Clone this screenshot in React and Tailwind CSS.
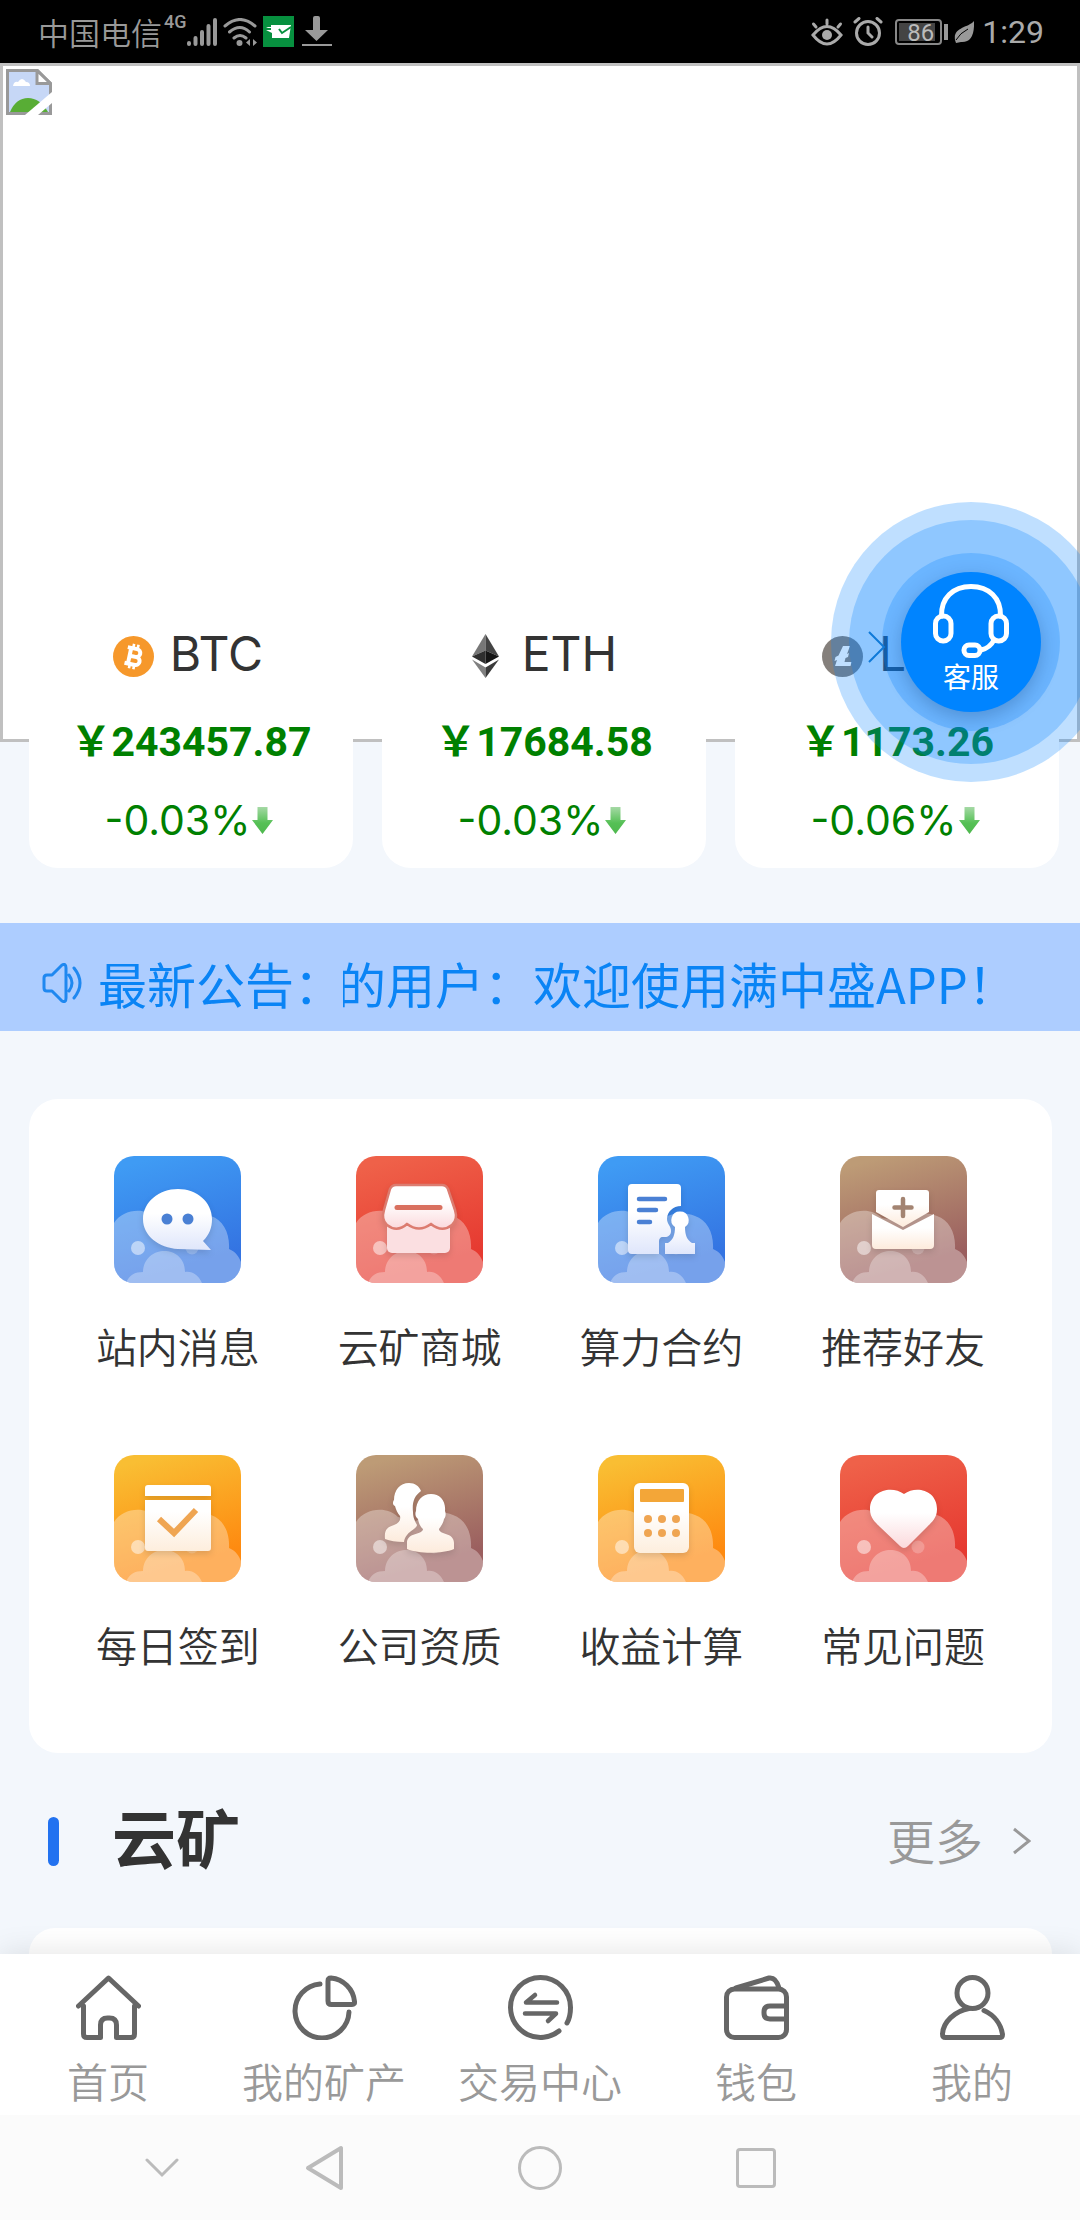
const coins = [
  { name: 'BTC', price: '243457.87', change: '-0.03%', Icon: BtcIcon },
  { name: 'ETH', price: '17684.58', change: '-0.03%', Icon: EthIcon },
  { name: 'LTC', price: '1173.26', change: '-0.06%', Icon: LtcIcon },
]

const tints = {
  blue: { from: '#3f9bf4', to: '#3474e2', glyph: '#dfe6fb', ink: '#4a80d4' },
  red: { from: '#ef6149', to: '#e63a31', glyph: '#fbd9dc', ink: '#d9705f' },
  brown: { from: '#bd9b76', to: '#9b5f5f', glyph: '#fdebdc', ink: '#a38472' },
  orange: { from: '#f9be33', to: '#fe8a10', glyph: '#fdeedd', ink: '#efa552' },
}

const menu = [
  { id: 'message', label: '站内消息', tint: 'blue', Glyph: MessageGlyph },
  { id: 'shop', label: '云矿商城', tint: 'red', Glyph: ShopGlyph },
  { id: 'contract', label: '算力合约', tint: 'blue', Glyph: ContractGlyph },
  { id: 'invite', label: '推荐好友', tint: 'brown', Glyph: InviteGlyph },
  { id: 'signin', label: '每日签到', tint: 'orange', Glyph: SigninGlyph },
  { id: 'company', label: '公司资质', tint: 'brown', Glyph: CompanyGlyph },
  { id: 'calc', label: '收益计算', tint: 'orange', Glyph: CalcGlyph },
  { id: 'faq', label: '常见问题', tint: 'red', Glyph: HeartGlyph },
]

const tabs = [
  { label: '首页', Icon: HomeIcon },
  { label: '我的矿产', Icon: PieIcon },
  { label: '交易中心', Icon: ExchangeIcon },
  { label: '钱包', Icon: WalletIcon },
  { label: '我的', Icon: UserIcon },
]

/* ---------- coin icons ---------- */

function BtcIcon() {
  return (
    <svg viewBox="0 0 41 41" className="w-[41px] h-[41px] mt-1">
      <circle cx="20.5" cy="20.5" r="20.5" fill="#f6982b" />
      <g fill="none" stroke="#fff" strokeWidth="4" strokeLinejoin="round" transform="rotate(12 20.5 20.5)">
        <path d="M13 12.5h9.5a4 4 0 0 1 0 8H17M16.500 12.500v16M13 28.500h10.500a4 4 0 0 0 0-8H17" />
        <path d="M18.500 8v4M23 8v4M18.500 29v4M23 29v4" strokeWidth="2.600" />
      </g>
    </svg>
  )
}

function EthIcon() {
  return (
    <svg viewBox="0 0 41 46" className="w-[41px] h-[46px] mt-1">
      <path d="M20.500 1L7 23.500l13.500-6z" fill="#777" />
      <path d="M20.500 1L34 23.500l-13.500-6z" fill="#444" />
      <path d="M7 23.500l13.500-6V31z" fill="#2f2f2f" />
      <path d="M34 23.500l-13.500-6V31z" fill="#151515" />
      <path d="M7 26.500l13.500 8V45z" fill="#808080" />
      <path d="M34 26.500l-13.500 8V45z" fill="#3a3a3a" />
    </svg>
  )
}

function LtcIcon() {
  return (
    <svg viewBox="0 0 41 41" className="w-[41px] h-[41px] mt-1">
      <circle cx="20.500" cy="20.500" r="20.500" fill="#85807c" />
      <path d="M21 10h7l-3 8 2-1-1 4-2.500 1-1 4h7l-1 4H13l2-6-2.500 1 1-4 3-1.500z" fill="#fff" />
    </svg>
  )
}

function DownArrow() {
  return (
    <svg viewBox="0 0 21 27" className="w-[21px] h-[27px]">
      <defs>
        <linearGradient id="down" x1="0" y1="0" x2="0" y2="1">
          <stop offset="0" stopColor="#a5d9a5" />
          <stop offset=".6" stopColor="#55c055" />
          <stop offset="1" stopColor="#4fb84f" />
        </linearGradient>
      </defs>
      <path d="M5.500 0h10v13H21L10.500 27 0 13h5.500z" fill="url(#down)" />
    </svg>
  )
}

/* ---------- menu glyphs, drawn on a 127 grid ---------- */

function MessageGlyph({ fill, ink }) {
  return (
    <>
      <path d="M64 33c19 0 34 13 34 30 0 9-3 16-9 22l8 9c-10 0-22-1-33-1-19-1-35-13-35-30s16-30 35-30z" fill={fill} />
      <circle cx="53" cy="63" r="5.500" fill={ink} />
      <circle cx="74" cy="63" r="5.500" fill={ink} />
    </>
  )
}

function ShopGlyph({ fill, ink }) {
  return (
    <>
      <path d="M31 70h63v22a5 5 0 0 1-5 5H36a5 5 0 0 1-5-5z" fill="#fbdfe1" />
      <path
        d="M40 29h46q4 0 6 4l7 21q3 10-3 15-10 8-21-1-12 9-24 0-10 9-20 1-6-5-3-15l6-21q2-4 6-4z"
        fill={fill}
        stroke="#dc7c70"
        strokeWidth="2.500"
      />
      <path d="M41 51.500h43" stroke={ink} strokeWidth="5" strokeLinecap="round" />
    </>
  )
}

function ContractGlyph({ fill, ink }) {
  return (
    <>
      <path d="M34 28h45a4 4 0 0 1 4 4v18c-8 0-14 6-14 13 0 5 4 7 4 12 0 4-3 6-6 6h-2c-3 0-4 2-4 5v12H34a4 4 0 0 1-4-4V32a4 4 0 0 1 4-4z" fill={fill} />
      <path d="M41 43h26M41 54h17M41 66h11" stroke={ink} strokeWidth="4.500" strokeLinecap="round" />
      <path d="M82 55.500a8.500 8.500 0 0 1 5 15.500c0 8 2 13 7 16h3v11H67V87h3c5-3 7-8 7-16a8.500 8.500 0 0 1 5-15.500z" fill={fill} />
    </>
  )
}

function InviteGlyph({ fill, ink }) {
  return (
    <>
      <path d="M39 34h47a3 3 0 0 1 3 3v19L63 71 36 56V37a3 3 0 0 1 3-3z" fill={fill} />
      <path d="M63 43v17M54.500 51.500h17" stroke={ink} strokeWidth="4.500" strokeLinecap="round" />
      <path d="M32 58l31 16 31-16v31a4 4 0 0 1-4 4H36a4 4 0 0 1-4-4z" fill={fill} />
    </>
  )
}

function SigninGlyph({ fill, ink }) {
  return (
    <>
      <path d="M34 30h60a3 3 0 0 1 3 3v8H31v-8a3 3 0 0 1 3-3zM31 45h66v48a3 3 0 0 1-3 3H34a3 3 0 0 1-3-3z" fill={fill} />
      <path d="M45 64l15 14 22-23" fill="none" stroke={ink} strokeWidth="6" />
    </>
  )
}

function CompanyGlyph({ fill }) {
  return (
    <>
      <path d="M53 28c6 0 10 3 12 8-7 5-9 12-8 21 0 6 2 9 4 13-1 5-11 6-13 17-8 0-14-1-19-3-1-10 3-12 9-14 5-2 7-5 6-9-3-3-4-7-5-10-3-1-2-5-1-6 0-10 6-17 15-17z" fill={fill} />
      <path d="M75 39c9 0 15 7 14 17 1 2 1 6-1 8-1 5-3 7-5 10 0 6 15 3 15 14v6c-12 5-35 5-47 0v-6c0-11 16-8 16-14-3-3-4-5-5-10-3-2-3-6-2-8 0-10 6-17 15-17z" fill={fill} />
    </>
  )
}

function CalcGlyph({ fill, ink }) {
  return (
    <>
      <rect x="36" y="28" width="55" height="70" rx="6" fill={fill} />
      <rect x="42" y="34" width="44" height="13" rx="1" fill="#f3a638" />
      {[64, 78].map((cy) => [50, 64, 78].map((cx) => <circle key={cx + '-' + cy} cx={cx} cy={cy} r="4" fill={ink} />))}
    </>
  )
}

function HeartGlyph({ fill }) {
  return <path d="M64 39c12-9 33-4 33 15 0 9-5 13-10 18L68 91q-4 4-8 0L40 72c-5-5-10-9-10-18 0-19 22-24 34-15z" fill={fill} />
}

function MenuTile({ id, tint, Glyph }) {
  const t = tints[tint]
  return (
    <svg viewBox="0 0 127 127" className="w-[127px] h-[127px] rounded-[20px]">
      <defs>
        <linearGradient id={id + '-bg'} x1=".35" y1="0" x2=".65" y2="1">
          <stop offset="0" stopColor={t.from} />
          <stop offset=".85" stopColor={t.to} />
        </linearGradient>
        <linearGradient id={id + '-fg'} x1="0" y1="0" x2="0" y2="1">
          <stop offset=".4" stopColor="#fff" />
          <stop offset="1" stopColor={t.glyph} />
        </linearGradient>
      </defs>
      <rect width="127" height="127" fill={'url(#' + id + '-bg)'} />
      <path d="M0 67c8-13 30-17 42-5 8 1 13 2 18 4 10-9 25-11 37-6 12 4 19 17 18 33 7 3 10 8 12 13v21H0z" fill="#fff" opacity=".33" />
      <path d="M12 127c3-8 9-11 17-11 1-28 42-28 42 0 8-1 13 3 17 11z" fill="#fff" opacity=".3" />
      <circle cx="24" cy="92" r="7" fill="#fff" opacity=".5" />
      <circle cx="78" cy="92" r="6.500" fill="#fff" opacity=".22" />
      <g className="drop-shadow-md">
        <Glyph fill={'url(#' + id + '-fg)'} ink={t.ink} />
      </g>
    </svg>
  )
}

/* ---------- tab bar icons ---------- */

function TabSvg({ children }) {
  return (
    <svg
      viewBox="0 0 65 65"
      className="w-[65px] h-[65px]"
      fill="none"
      stroke="#666"
      strokeWidth="5"
      strokeLinecap="round"
      strokeLinejoin="round"
    >
      {children}
    </svg>
  )
}

function HomeIcon() {
  return (
    <TabSvg>
      <path d="M2.500 31L32.500 3l30 28M7.500 31v28q0 3.500 3.500 3.500h13.500V50q0-7 7-7h2q7 0 7 7v12.500H55q3.500 0 3.500-3.500V31" />
    </TabSvg>
  )
}

function PieIcon() {
  return (
    <TabSvg>
      <path d="M28 9A27 27 0 1 0 57 37" />
      <path d="M39 3q-3 0-3 3v20q0 3.500 3.500 3.500H60q3 0 2.500-3A26 26 0 0 0 39 3z" />
    </TabSvg>
  )
}

function ExchangeIcon() {
  return (
    <TabSvg>
      <path d="M51 56A30 30 0 0 1 2.500 32.500a30 30 0 0 1 60 0Q62.500 42 59 48" />
      <path d="M49 27.500H18l9-7.500M17 38.500h31l-8 7.500" strokeWidth="4.500" />
    </TabSvg>
  )
}

function WalletIcon() {
  return (
    <TabSvg>
      <rect x="2.500" y="14" width="60" height="48.500" rx="8" />
      <path d="M12 13L45 3q7-1 10 10M62 31H46q-6 0-6 6v1q0 6 6 6h16" />
    </TabSvg>
  )
}

function UserIcon() {
  return (
    <TabSvg>
      <circle cx="32.500" cy="18" r="15.500" />
      <path d="M29 33.500C15 36 3 47 2.500 59q0 3.500 3 3.500h54q3 0 3-3C61 49 54 40 44 35.500" />
    </TabSvg>
  )
}

/* ---------- page parts ---------- */

function StatusBar() {
  return (
    <div className="h-[63px] bg-black text-[#999] flex items-center justify-between pl-[38px] pr-9">
      <div className="flex items-center">
        <span className="text-[31px] leading-10 font-[350]">中国电信</span>
        <span className="text-[18px] leading-5 ml-0.5 self-start font-[Roboto] font-medium">4G</span>
        <svg viewBox="0 0 30 30" className="w-[30px] h-[30px]" stroke="#999" strokeWidth="4" strokeLinecap="round">
          <path d="M2 26v1M8.500 21v6M15 15v12M21.500 9v18M28 3v24" />
        </svg>
        <svg viewBox="0 0 34 28" className="w-[34px] h-7 ml-1.5" fill="none" stroke="#999" strokeWidth="3" strokeLinecap="round">
          <path d="M2 8q15-13 30 0M6.500 14q10.500-9 20 0M11 20q6-5 12 0" />
          <circle cx="16.500" cy="25" r="1.500" fill="#999" />
          <path d="M27 21v7l-4-3.500zM30 21v7l4-3.500z" fill="#999" stroke="none" />
        </svg>
        <svg viewBox="0 0 31 31" className="w-[31px] h-[31px] ml-1.5">
          <rect width="31" height="31" fill="#07903f" />
          <path d="M8 9h20l-2 13H9v-5L3 14h5v-2H5l-2-1h5z" fill="#fff" />
          <path d="M16 13l3 4 9-6" fill="none" stroke="#07903f" strokeWidth="2" />
        </svg>
        <svg viewBox="0 0 30 31" className="w-[30px] h-[31px] ml-2" fill="#999">
          <path d="M11 2q0-2 2-2h3q2 0 2 2v12h8L14.500 25 3 14h8zM0 28h30v2H0z" />
        </svg>
      </div>
      <div className="flex items-center">
        <svg viewBox="0 0 32 28" className="w-8 h-7" fill="none" stroke="#aaa" strokeWidth="3" strokeLinecap="round">
          <path d="M2 17q14-17 28 0-14 18-28 0zM16 6V2M5 9L2.500 6M27 9l2.500-3" />
          <circle cx="16" cy="17" r="5" fill="#aaa" stroke="none" />
        </svg>
        <svg viewBox="0 0 30 29" className="w-[30px] h-[29px] ml-[10px]" fill="none" stroke="#aaa" strokeWidth="3" strokeLinecap="round">
          <circle cx="15" cy="16" r="11.500" />
          <path d="M15 10v6l4 4M2 5l4-3.500M28 5l-4-3.500" />
        </svg>
        <div className="ml-3 h-[26px] w-[47px] border-2 border-[#888] rounded p-0.5">
          <div className="bg-[#444] h-full w-9 text-[24px] leading-5 pl-2 text-[#bbb] font-[Roboto]">86</div>
        </div>
        <div className="w-1 h-4 bg-[#999] ml-0.5" />
        <svg viewBox="0 0 20 22" className="w-5 h-[22px] ml-1.5">
          <path d="M20 0q1 22-13 21l-5 1-1-3C-1 6 14 7 20 0z" fill="#999" />
          <path d="M2 19Q6 12 14 8" stroke="#000" fill="none" />
        </svg>
        <span className="text-[32px] leading-10 ml-2 font-[Roboto] text-[#aaa]">1:29</span>
      </div>
    </div>
  )
}

function BrokenImage() {
  return (
    <svg viewBox="0 0 46 46" className="w-[46px] h-[46px]">
      <path d="M1.500 1.500h30l13 13v30h-43z" fill="#c6d7f6" stroke="#999" strokeWidth="3" />
      <path d="M7 17q1-5 5-4 4-6 8 0 4 0 4 4z" fill="#fff" />
      <path d="M4 43q6-14 18-14 12 0 20 14z" fill="#58ad35" />
      <path d="M31 1.500v13h13.500z" fill="#fff" stroke="#999" strokeWidth="3" />
      <path d="M19 46L46 23v11L32 46z" fill="#fff" />
    </svg>
  )
}

function CoinCard({ coin }) {
  const { Icon } = coin
  return (
    <div className="bg-white rounded-[29px] pt-4 pb-6 flex flex-col items-center">
      <div className="h-14 flex items-center gap-4 pr-1.5">
        <Icon />
        <span className="text-[48px] leading-[56px] text-[#333] font-[Inter]">{coin.name}</span>
      </div>
      <div className="mt-9 text-[41px] leading-[48px] font-bold text-[#008000] font-[Roboto,'Noto_Sans_CJK_SC',sans-serif]">
        ￥{coin.price}
      </div>
      <div className="mt-[30px] h-12 flex items-center gap-0.5 pr-1">
        <span className="text-[41px] leading-[48px] text-[#008000] font-[Inter]">{coin.change}</span>
        <DownArrow />
      </div>
    </div>
  )
}

function ServiceButton() {
  return (
    <button
      type="button"
      className="absolute top-[502px] -right-[31px] w-[280px] h-[280px] rounded-full bg-[#0080ff]/25 flex items-center justify-center"
    >
      <span className="w-[244px] h-[244px] rounded-full bg-[#0080ff]/25 flex items-center justify-center">
        <span className="w-[178px] h-[178px] rounded-full bg-[#0080ff]/25 flex items-center justify-center">
          <span className="w-[140px] h-[140px] rounded-full bg-[#0084ff] shadow-[0_6px_18px_rgba(0,40,90,0.25)] flex flex-col items-center pt-3">
            <svg viewBox="0 0 76 74" className="w-[76px] h-[74px]" fill="none" stroke="#fff" strokeWidth="5" strokeLinecap="round">
              <path d="M8.500 32C8 14 20 2.500 38 2.500S68 14 67.500 32" />
              <rect x="2.500" y="32" width="15.500" height="25" rx="7.500" />
              <rect x="58" y="32" width="15.500" height="25" rx="7.500" />
              <rect x="31" y="61" width="16" height="10.500" rx="5" />
              <path d="M48 66q9-2 13-10" />
            </svg>
            <span className="text-[28px] leading-9 text-white">客服</span>
          </span>
        </span>
      </span>
      <svg viewBox="0 0 18 32" className="absolute left-[37px] top-[129px] w-[18px] h-8" fill="none" stroke="#0f7ad8" strokeWidth="2">
        <path d="M1 1l15 15L1 31" />
      </svg>
    </button>
  )
}

function Notice() {
  return (
    <div className="mt-[55px] h-[108px] bg-[#adcdff] text-[#0a84f5] flex items-center pt-3 pl-[42px] pr-10 text-[49px] leading-[60px]">
      <svg viewBox="0 0 40 40" className="w-10 h-10 mr-4 shrink-0" fill="none" stroke="#1f88f0" strokeWidth="3" strokeLinejoin="round" strokeLinecap="round">
        <path d="M5 12h5L20 2q4-2 4 3v30q0 5-4 3L10 28H5q-3 0-3-3V15q0-3 3-3zM27 12q6 8 0 16M32 5q12 15 0 30" />
      </svg>
      <span className="shrink-0">最新公告：</span>
      <div className="overflow-hidden flex-1">
        <p className="whitespace-nowrap -ml-1.5">的用户：欢迎使用满中盛APP！</p>
      </div>
    </div>
  )
}

function SystemNav() {
  return (
    <div className="h-[105px] bg-[#fbfbfb] grid grid-cols-10 items-center justify-items-center">
      <button type="button" aria-label="收起" className="col-start-2">
        <svg viewBox="0 0 34 20" className="w-[34px] h-5" fill="none" stroke="#bbb" strokeWidth="3" strokeLinecap="round">
          <path d="M2 2l15 15L32 2" />
        </svg>
      </button>
      <button type="button" aria-label="返回" className="col-span-2">
        <svg viewBox="0 0 38 46" className="w-[38px] h-[46px]" fill="none" stroke="#bbb" strokeWidth="4" strokeLinejoin="round">
          <path d="M36 3v40L3 23z" />
        </svg>
      </button>
      <button type="button" aria-label="主屏幕" className="col-span-2 w-11 h-11 rounded-full border-[3px] border-[#bbb]" />
      <button type="button" aria-label="最近任务" className="col-span-2 w-10 h-10 rounded border-[3px] border-[#bbb]" />
    </div>
  )
}

export default function App() {
  return (
    <div className="relative min-h-screen overflow-hidden flex flex-col bg-[#f3f7fc] font-['Noto_Sans_CJK_SC',sans-serif]">
      <StatusBar />

      <div className="h-[679px] bg-white border-3 border-[#c0c0c0] p-[3px]">
        <BrokenImage />
      </div>

      <div className="-mt-[132px] pl-[29px] pr-[21px] grid grid-cols-3 gap-[29px]">
        {coins.map((coin) => (
          <CoinCard key={coin.name} coin={coin} />
        ))}
      </div>

      <ServiceButton />
      <Notice />

      <div className="mt-[68px] ml-[29px] mr-7 bg-white rounded-[29px] pt-[57px] pb-[79px] px-7 grid grid-cols-4 gap-y-20">
        {menu.map((item) => (
          <a key={item.id} href={'#' + item.id} className="flex flex-col items-center">
            <MenuTile id={item.id} tint={item.tint} Glyph={item.Glyph} />
            <span className="mt-8 text-[41px] leading-[60px] font-[350] text-[#333]">{item.label}</span>
          </a>
        ))}
      </div>

      <div className="pt-14 pb-[55px] pl-12 pr-[49px] flex items-center">
        <span className="w-[11px] h-[49px] rounded-full bg-[#2272f0]" />
        <h2 className="ml-[53px] pb-3 text-[64px] leading-[52px] font-bold text-[#333]">云矿</h2>
        <a href="#more" className="ml-auto flex items-center text-[48px] leading-[56px] font-[350] text-[#999]">
          <span className="pb-1">更多</span>
          <svg viewBox="0 0 18 28" className="ml-[30px] w-[18px] h-7" fill="none" stroke="#999" strokeWidth="3">
            <path d="M1 2l15 12L1 26" />
          </svg>
        </a>
      </div>

      <div className="flex-1 min-h-6 ml-[29px] mr-7 bg-white rounded-t-[29px]" />

      <nav className="bg-white shadow-[0_-2px_28px_rgba(0,0,0,0.1)] grid grid-cols-5 pt-[21px] pb-[9px]">
        {tabs.map(({ label, Icon }) => (
          <a key={label} href={'#' + label} className="flex flex-col items-center">
            <Icon />
            <span className="mt-3.5 text-[41px] leading-[52px] font-[350] text-[#999]">{label}</span>
          </a>
        ))}
      </nav>
      <SystemNav />
    </div>
  )
}
